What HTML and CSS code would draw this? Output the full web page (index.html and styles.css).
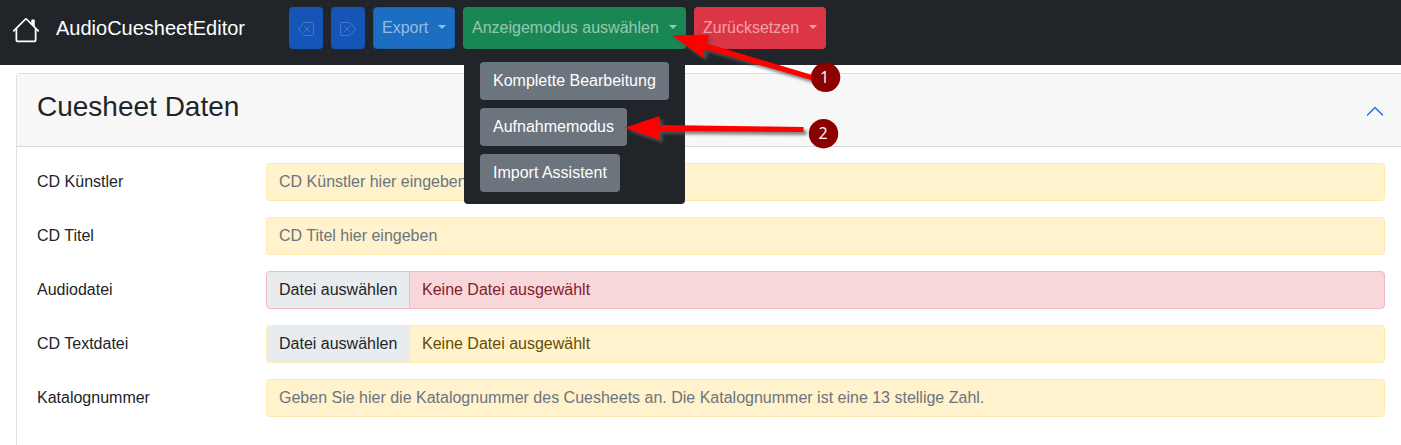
FILE: index.html
```html
<!DOCTYPE html>
<html lang="de">
<head>
<meta charset="utf-8">
<title>AudioCuesheetEditor</title>
<link rel="stylesheet" href="styles.css">
</head>
<body>
<nav class="navbar">
  <svg class="home" viewBox="0 0 16 16" fill="currentColor"><path fill-rule="evenodd" d="M2 13.5V7h1v6.5a.5.5 0 0 0 .5.5h9a.5.5 0 0 0 .5-.5V7h1v6.5a1.5 1.5 0 0 1-1.5 1.5h-9A1.5 1.5 0 0 1 2 13.500zm11-11V6l-2-2V2.500a.5.5 0 0 1 .5-.5h1a.5.5 0 0 1 .5.5z"/><path fill-rule="evenodd" d="M7.293 1.500a1 1 0 0 1 1.414 0l6.647 6.646a.5.5 0 0 1-.708.708L8 2.207 1.354 8.854a.5.5 0 1 1-.708-.708L7.293 1.500z"/></svg>
  <span class="brand">AudioCuesheetEditor</span>
  <div class="actions">
    <button class="btn icon-btn"><svg viewBox="0 0 16 16" fill="none" stroke="currentColor" stroke-linecap="round" stroke-linejoin="round"><path d="M6.600 1.500h7.900a1 1 0 0 1 1 1v11a1 1 0 0 1-1 1H6.600a1 1 0 0 1-.76-.35L.5 8l5.340-6.150a1 1 0 0 1 .76-.35zM6.500 5.500l5 5m0-5l-5 5"/></svg></button>
    <button class="btn icon-btn"><svg class="flip" viewBox="0 0 16 16" fill="none" stroke="currentColor" stroke-linecap="round" stroke-linejoin="round"><path d="M6.600 1.500h7.900a1 1 0 0 1 1 1v11a1 1 0 0 1-1 1H6.600a1 1 0 0 1-.76-.35L.5 8l5.340-6.150a1 1 0 0 1 .76-.35zM6.500 5.500l5 5m0-5l-5 5"/></svg></button>
    <button class="btn export">Export<i class="caret"></i></button>
    <div class="dropdown">
      <button class="btn mode">Anzeigemodus auswählen<i class="caret"></i></button>
      <div class="menu">
        <button class="item">Komplette Bearbeitung</button>
        <button class="item">Aufnahmemodus</button>
        <button class="item">Import Assistent</button>
      </div>
    </div>
    <button class="btn reset">Zurücksetzen<i class="caret"></i></button>
  </div>
</nav>
<main class="card">
  <header class="card-header">
    <h1>Cuesheet Daten</h1>
    <svg class="chevron" viewBox="0 0 18 18" fill="none" stroke="currentColor" stroke-width="1.4" stroke-linecap="round" stroke-linejoin="round"><path d="M1.500 13L9 5.500l7.500 7.500"/></svg>
  </header>
  <div class="card-body">
    <div class="row"><label>CD Künstler</label><div class="control placeholder">CD Künstler hier eingeben</div></div>
    <div class="row"><label>CD Titel</label><div class="control placeholder">CD Titel hier eingeben</div></div>
    <div class="row"><label>Audiodatei</label><div class="control file danger"><span class="pick">Datei auswählen</span><span class="value">Keine Datei ausgewählt</span></div></div>
    <div class="row"><label>CD Textdatei</label><div class="control file"><span class="pick">Datei auswählen</span><span class="value">Keine Datei ausgewählt</span></div></div>
    <div class="row"><label>Katalognummer</label><div class="control placeholder">Geben Sie hier die Katalognummer des Cuesheets an. Die Katalognummer ist eine 13 stellige Zahl.</div></div>
  </div>
</main>
<svg class="annotations" viewBox="0 0 1401 445">
  <g class="arrow">
    <path d="M671.500 35.300L709 34.700L707.500 43.700L813 75.200V80.500L705.300 49.300L703 57.500z"/>
    <path d="M624.500 127.700L659.700 116V125L803.500 126.900V132.100L659.700 131V140z"/>
  </g>
  <circle cx="825.600" cy="77.300" r="14.700"/>
  <circle cx="823.500" cy="133.700" r="14.700"/>
  <text x="824.500" y="83">1</text>
  <text x="823" y="139">2</text>
</svg>
</body>
</html>
```
FILE: styles.css
```css
* { box-sizing: border-box; }
body {
  margin: 0;
  height: 445px;
  overflow: hidden;
  background: #fff;
  color: #212529;
  font: 16px/24px "Liberation Sans", Arial, sans-serif;
}
button { font: inherit; }
.navbar {
  display: flex;
  align-items: flex-start;
  height: 65px;
  padding: 7px 12px;
  background: #212529;
  color: #fff;
}
.home { width: 28px; height: 28px; margin-top: 9px; }
.brand {
  width: 233px;
  padding: 6px 0 0 16px;
  font-size: 20px;
  line-height: 30px;
  white-space: nowrap;
}
.actions { display: flex; gap: 8px; margin-left: 16px; }
.btn {
  display: flex;
  align-items: center;
  height: 42px;
  padding: 0 8px;
  border: 1px solid transparent;
  border-radius: 4px;
  white-space: nowrap;
  color: rgba(255, 255, 255, .55);
}
.icon-btn {
  width: 34px;
  padding: 2px 8px 0;
  background: #1555b8;
  color: #4479c6;
}
.icon-btn svg { width: 16px; height: 16px; }
.flip { transform: scaleX(-1); }
.export { width: 82px; background: #1b6ec2; border-color: #1861ac; }
.mode { width: 223px; background: #198754; }
.reset { width: 132px; background: #dc3545; }
.caret {
  margin: 0 0 2px auto;
  border: 4.800px solid transparent;
  border-top-color: currentColor;
  border-bottom: 0;
}
.dropdown { position: relative; }
.menu {
  position: absolute;
  z-index: 1;
  top: 42px;
  left: 1px;
  display: flex;
  flex-direction: column;
  align-items: flex-start;
  gap: 8px;
  width: 221px;
  height: 155px;
  padding: 13px 16px 12px;
  background: #212529;
  border-radius: 4px;
}
.item {
  height: 38px;
  padding: 0 13px;
  border: 0;
  border-radius: 4px;
  background: #6c757d;
  color: #fff;
  white-space: nowrap;
}
.card {
  height: 372px;
  margin: 8px 0 0 16px;
  border: solid #dfdfdf;
  border-width: 1px 0 0 1px;
  border-radius: 4px 0 0 0;
}
.card-header {
  display: flex;
  justify-content: space-between;
  align-items: flex-start;
  height: 73px;
  padding: 16px 17px 0 20px;
  border-bottom: 1px solid #d8d8d8;
  background: #f7f7f7;
}
h1 { margin: 0; font-size: 28px; font-weight: 400; line-height: 34px; }
.chevron { width: 18px; height: 18px; margin-top: 12px; color: #1b6ee8; }
.card-body {
  display: flex;
  flex-direction: column;
  gap: 16px;
  padding: 16px 16px 0 20px;
}
.row { display: grid; grid-template-columns: 229px 1fr; align-items: center; }
.control {
  height: 38px;
  padding: 6px 12px;
  border: 1px solid #ffe9ac;
  border-radius: 4px;
  background: #fff2cd;
  color: #664d03;
}
.placeholder { color: #6c757d; }
.file { display: flex; padding: 0; overflow: hidden; }
.pick {
  width: 143px;
  padding: 6px 0 6px 12px;
  border-right: 1px solid #ffe9ac;
  background: #e9ecef;
  color: #212529;
  white-space: nowrap;
}
.value { padding: 6px 12px; }
.danger { border-color: #f4b9c1; background: #f8d7da; color: #842029; }
.danger .pick { border-color: #f4b9c1; }
.annotations {
  position: absolute;
  z-index: 2;
  top: 0;
  left: 0;
  width: 1401px;
  height: 445px;
  pointer-events: none;
}
.arrow { fill: #f00; filter: drop-shadow(3px 3px 1.500px rgba(90, 90, 90, .75)); }
.annotations circle { fill: #8b0000; }
.annotations text {
  fill: #fff;
  font: 16px "Open Sans", "Noto Sans", sans-serif;
  text-anchor: middle;
}
```
